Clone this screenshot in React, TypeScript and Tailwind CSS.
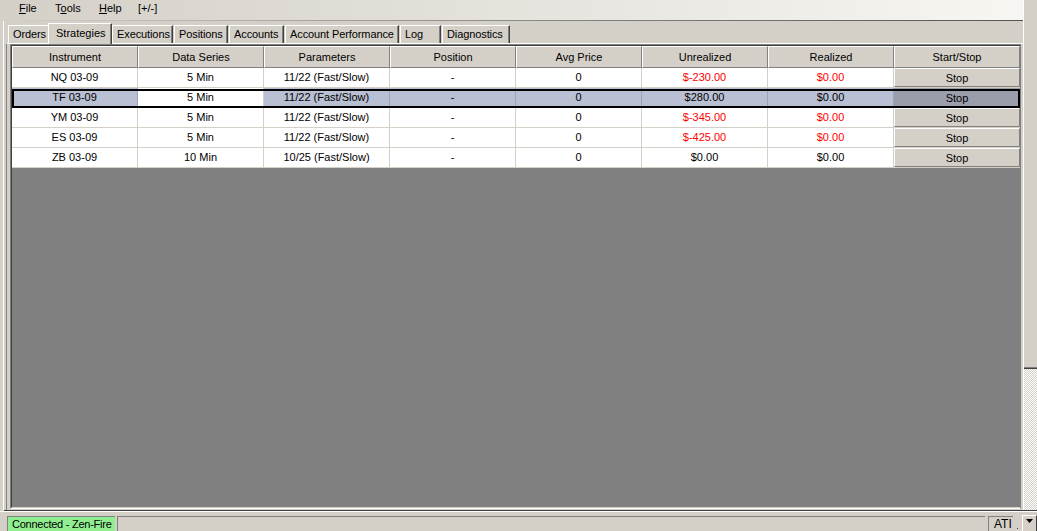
import React from 'react';

type Row = {
  instrument: string;
  series: string;
  params: string;
  position: string;
  avg: string;
  unrealized: string;
  realized: string;
  unrealRed: boolean;
  realRed: boolean;
};

const rows: Row[] = [
  { instrument: 'NQ 03-09', series: '5 Min', params: '11/22 (Fast/Slow)', position: '-', avg: '0', unrealized: '$-230.00', realized: '$0.00', unrealRed: true, realRed: true },
  { instrument: 'TF 03-09', series: '5 Min', params: '11/22 (Fast/Slow)', position: '-', avg: '0', unrealized: '$280.00', realized: '$0.00', unrealRed: false, realRed: false },
  { instrument: 'YM 03-09', series: '5 Min', params: '11/22 (Fast/Slow)', position: '-', avg: '0', unrealized: '$-345.00', realized: '$0.00', unrealRed: true, realRed: true },
  { instrument: 'ES 03-09', series: '5 Min', params: '11/22 (Fast/Slow)', position: '-', avg: '0', unrealized: '$-425.00', realized: '$0.00', unrealRed: true, realRed: true },
  { instrument: 'ZB 03-09', series: '10 Min', params: '10/25 (Fast/Slow)', position: '-', avg: '0', unrealized: '$0.00', realized: '$0.00', unrealRed: false, realRed: false },
];

const columns = ['Instrument', 'Data Series', 'Parameters', 'Position', 'Avg Price', 'Unrealized', 'Realized', 'Start/Stop'];

// tabs with their own offsets/widths, as measured on the screenshot
const tabs = [
  { label: 'Orders', cls: 'ml-[2px] w-[42px]' },
  { label: 'Strategies', cls: 'ml-[-2px] w-[64px]', selected: true },
  { label: 'Executions', cls: 'ml-0 w-[61px]' },
  { label: 'Positions', cls: 'ml-[1px] w-[54px]' },
  { label: 'Accounts', cls: 'ml-[1px] w-[55px]' },
  { label: 'Account Performance', cls: 'ml-[1px] w-[114px]' },
  { label: 'Log', cls: 'ml-[1px] w-[41px]' },
  { label: 'Diagnostics', cls: 'ml-[1px] w-[68px]' },
];

const Tab: React.FC<{ label: string; cls: string; selected?: boolean }> = ({ label, cls, selected }) => {
  if (selected) {
    return (
      <div className={`${cls} relative z-10 h-[21px] -mb-px shrink-0 bg-[#d4d0c8] border-t border-l border-white border-r border-r-[#404040] shadow-[inset_-1px_0_#808080] flex items-start pt-[1px] pl-[7px] whitespace-nowrap`}>
        {label}
      </div>
    );
  }
  return (
    <div className={`${cls} h-[18px] shrink-0 bg-[#d4d0c8] border-t border-l border-white border-r border-r-[#404040] shadow-[inset_-1px_0_#808080] flex items-center pl-[4px] whitespace-nowrap tracking-[-0.1px]`}>
      {label}
    </div>
  );
};

const GridRow: React.FC<{ row: Row; selected?: boolean }> = ({ row, selected }) => {
  const cell = selected
    ? 'w-[126px] shrink-0 flex items-center justify-center border-r border-r-[#9ca3b5] bg-[#b9c0d3]'
    : 'w-[126px] shrink-0 flex items-center justify-center border-r border-r-[#d4d0c8] bg-white';
  const red = (on: boolean) => (on && !selected ? 'text-[#ff0000]' : 'text-black');
  return (
    <div className={`relative flex h-[20px] border-b ${selected ? 'border-b-[#9ca3b5]' : 'border-b-[#d4d0c8]'}`}>
      <div className={cell}>{row.instrument}</div>
      <div className={selected ? 'w-[126px] shrink-0 flex items-center justify-center border-r border-r-[#d4d0c8] bg-white' : cell}>{row.series}</div>
      <div className={cell}>{row.params}</div>
      <div className={cell}>{row.position}</div>
      <div className={cell}>{row.avg}</div>
      <div className={`${cell} ${red(row.unrealRed)}`}>{row.unrealized}</div>
      <div className={`${cell} ${red(row.realRed)}`}>{row.realized}</div>
      {selected ? (
        <div className="w-[126px] shrink-0 flex items-center justify-center pt-[2px] bg-[#9a9eab]">Stop</div>
      ) : (
        <div className="w-[126px] shrink-0 flex items-center justify-center pt-[2px] bg-[#d4d0c8] border-t border-l border-white border-b border-r border-b-[#808080] border-r-[#808080]">
          Stop
        </div>
      )}
      {selected && <div className="absolute inset-x-0 top-[1px] -bottom-px border-2 border-black pointer-events-none" />}
    </div>
  );
};

export default function App() {
  return (
    <div className="w-[1037px] h-[531px] overflow-hidden bg-[#d4d0c8] font-['Liberation_Sans',Arial,sans-serif] text-[11px] text-black flex flex-col select-none">
      <div className="flex h-[510px] shrink-0">
        {/* main area */}
        <div className="w-[1023px] shrink-0 flex flex-col">
          {/* menu bar */}
          <div className="h-[21px] shrink-0 flex flex-col bg-linear-to-r from-[#d4d0c8] to-[#f7f6f2]">
            <div className="h-[20px] flex items-center pl-[19px] pb-[3px]">
              <span className="w-[36px]"><span className="underline">F</span>ile</span>
              <span className="w-[44px]">T<span className="underline">o</span>ols</span>
              <span className="w-[39px]"><span className="underline">H</span>elp</span>
              <span>[+/-]</span>
            </div>
            <div className="h-px bg-linear-to-r from-[#d4d0c8] via-[#8a8a8a] to-[#555555]" />
          </div>

          {/* docked panel */}
          <div className="flex-1 pl-[3px] flex flex-col min-h-0">
            <div className="flex-1 border-l border-white pl-[2px] pt-[1px] flex flex-col min-h-0">
              {/* tab strip */}
              <div className="h-[21px] shrink-0 flex items-end">
                {tabs.map((t) => (
                  <Tab key={t.label} label={t.label} cls={t.cls} selected={t.selected} />
                ))}
              </div>

              {/* tab page */}
              <div className="flex-1 min-h-0 border-t border-white border-l border-l-[#808080] pl-[3px] pr-[2px] pb-px flex flex-col">
                <div className="flex-1 min-h-0 border-t border-l border-[#808080] border-r border-b border-b-white flex flex-col">
                  <div className="flex-1 min-h-0 border-t border-l border-[#404040] border-b border-b-[#d4d0c8] bg-[#808080] flex flex-col">
                    {/* header */}
                    <div className="flex h-[22px] shrink-0">
                      {columns.map((c) => (
                        <div
                          key={c}
                          className="w-[126px] shrink-0 flex items-center justify-center pt-[1px] bg-[#d4d0c8] border-t border-l border-white border-b border-r border-b-[#808080] border-r-[#808080]"
                        >
                          {c}
                        </div>
                      ))}
                    </div>
                    {rows.map((r, i) => (
                      <GridRow key={r.instrument} row={r} selected={i === 1} />
                    ))}
                  </div>
                </div>
              </div>
            </div>
          </div>
        </div>

        {/* vertical scrollbar */}
        <div className="flex-1 border-l border-white flex flex-col">
          <div className="h-[369px] shrink-0 bg-[#d4d0c8] border-b border-b-[#404040] shadow-[inset_0_-1px_#808080]" />
          <div className="flex-1 [background-image:repeating-conic-gradient(#ffffff_0%_25%,#d4d0c8_0%_50%)] [background-size:2px_2px]" />
        </div>
      </div>

      <div className="h-px ml-[4px] shrink-0 bg-[#404040]" />

      {/* status bar */}
      <div className="flex-1 flex items-end pl-[7px] border-t border-white">
        <div className="w-[108px] h-[15px] shrink-0 bg-[#90ee90] border-t border-l border-[#808080] pl-[4px] leading-[14px] whitespace-nowrap tracking-[-0.25px]">
          Connected - Zen-Fire
        </div>
        <div className="w-[868px] h-[15px] shrink-0 ml-[2px] border-t border-l border-[#808080]" />
        <div className="w-[25px] h-[15px] shrink-0 ml-[3px] border-t border-l border-[#808080] pl-[5px] text-[12px] leading-[14px]">
          ATI
        </div>
        <div className="w-[9px] h-[15px] shrink-0 flex items-end justify-center pb-[2px]">
          <div className="w-px h-px bg-[#404040]" />
        </div>
        <div className="w-[15px] h-[16px] shrink-0 bg-[#d4d0c8] border-t border-l border-white border-r border-r-[#404040] flex justify-center pt-[3px]">
          <svg width="7" height="4" viewBox="0 0 7 4">
            <path d="M0 0h7L3.5 4z" fill="#000" />
          </svg>
        </div>
      </div>
    </div>
  );
}
